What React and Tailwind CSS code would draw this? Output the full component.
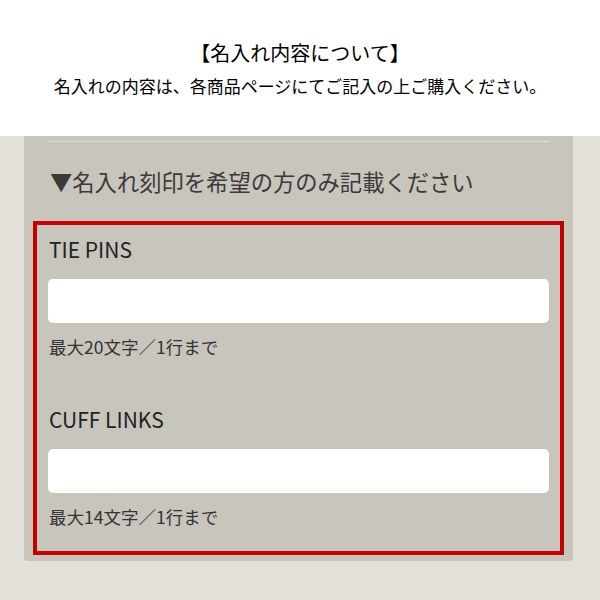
import React from "react";

const fields = [
  { label: "TIE PINS", note: "最大20文字／1行まで" },
  { label: "CUFF LINKS", note: "最大14文字／1行まで" },
];

const NameField = ({ label, note, first }) => (
  <div className={first ? "" : "mt-[46px]"}>
    <p className="ml-px text-[21px] leading-[28px] text-[#222]">{label}</p>
    <input
      type="text"
      className="mt-[16px] block h-[44px] w-full rounded-[5px] bg-white px-3 outline-none"
    />
    <p className="ml-px mt-[12px] text-[17.5px] leading-[24px] text-[#333]">{note}</p>
  </div>
);

const App = () => {
  return (
    <div className="w-[600px] h-[600px] overflow-hidden bg-[#e3e0da] font-['Noto_Sans_CJK_JP','Noto_Sans',sans-serif]">
      {/* Intro */}
      <div className="h-[136px] bg-white flex flex-col items-center pt-[39px] text-black">
        <h2 className="text-[20px] leading-[28px]">【名入れ内容について】</h2>
        <p className="mt-[6px] text-[17px] leading-[26px]">
          名入れの内容は、各商品ページにてご記入の上ご購入ください。
        </p>
      </div>

      {/* Engraving panel */}
      <div className="pl-[24px] pr-[27px]">
        <div className="h-[425px] rounded-b-[4px] bg-[#c8c5bd] pl-[9px] pr-[9px] pt-[5px]">
          <div className="mx-[15px] border-t border-dotted border-[#f4f2ee]" />
          <h3 className="mt-[24px] ml-[17px] text-[22.3px] leading-[30px] text-[#3a3a3a]">
            ▼名入れ刻印を希望の方のみ記載ください
          </h3>

          <div className="mt-[25px] border-[4px] border-[#c40000] px-[11px] pt-[10px] pb-[22px]">
            {fields.map((f, i) => (
              <NameField key={f.label} label={f.label} note={f.note} first={i === 0} />
            ))}
          </div>
        </div>
      </div>
    </div>
  );
};

export default App;
